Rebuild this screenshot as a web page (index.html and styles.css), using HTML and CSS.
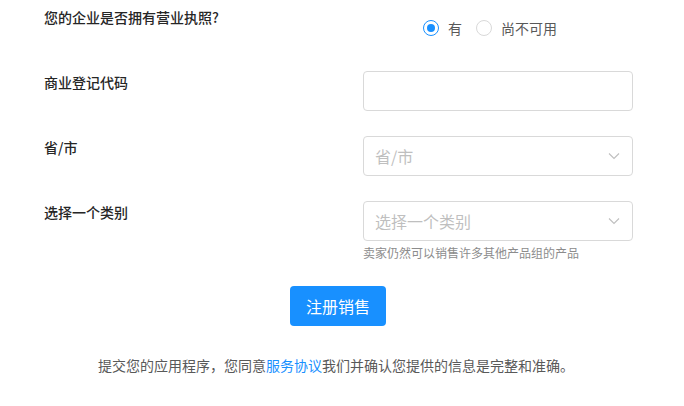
FILE: index.html
```html
<!DOCTYPE html>
<html lang="zh-CN">
<head>
  <meta charset="UTF-8">
  <title>注册销售</title>
  <link rel="stylesheet" href="styles.css">
</head>
<body>

  <div class="page">
    <!-- Seller form -->
    <form class="seller-form" onsubmit="return false">
      <div class="label">您的企业是否拥有营业执照?</div>
      <div class="radios">
        <label class="radio"><span class="dot checked"></span>有</label>
        <label class="radio"><span class="dot"></span>尚不可用</label>
      </div>

      <div class="label">商业登记代码</div>
      <div class="field">
        <input type="text" class="input">
      </div>

      <div class="label">省/市</div>
      <div class="field">
        <div class="select">
          <span class="placeholder">省/市</span>
          <svg class="arrow" width="12" height="8" viewBox="0 0 12 8"><path d="M1 1.5 L6 6.5 L11 1.5" fill="none" stroke="#bfbfbf" stroke-width="1.1"/></svg>
        </div>
      </div>

      <div class="label">选择一个类别</div>
      <div class="field">
        <div class="select">
          <span class="placeholder">选择一个类别</span>
          <svg class="arrow" width="12" height="8" viewBox="0 0 12 8"><path d="M1 1.5 L6 6.5 L11 1.5" fill="none" stroke="#bfbfbf" stroke-width="1.1"/></svg>
        </div>
        <div class="hint">卖家仍然可以销售许多其他产品组的产品</div>
      </div>
    </form>

    <div class="actions">
      <button class="btn-primary">注册销售</button>
    </div>

    <p class="terms">提交您的应用程序，您同意<a href="#">服务协议</a>我们并确认您提供的信息是完整和准确。</p>
  </div>

</body>
</html>
```

FILE: styles.css
```css
body {
  margin: 0;
  font-family: "Noto Sans CJK SC", "Noto Sans", sans-serif;
  background-color: #fff;
  color: #262626;
}

.page {
  width: 676px;
}

.seller-form {
  display: grid;
  grid-template-columns: 319px 270px;
  row-gap: 25px;
  padding: 6px 0 0 44px;
}

.label {
  font-size: 14px;
  line-height: 22px;
  font-weight: 500;
  color: #262626;
  min-height: 40px;
}

.radios {
  display: flex;
  align-items: center;
  padding: 11px 0 0 60px;
  height: 22px;
}

.radio {
  display: flex;
  align-items: center;
  font-size: 14px;
  color: #595959;
  margin-right: 14px;
}

.dot {
  width: 14px;
  height: 14px;
  border: 1px solid #d9d9d9;
  border-radius: 50%;
  margin-right: 9px;
  position: relative;
}

.dot.checked {
  border-color: #1890ff;
}

.dot.checked::after {
  content: "";
  position: absolute;
  left: 3px;
  top: 3px;
  width: 8px;
  height: 8px;
  border-radius: 50%;
  background-color: #1890ff;
}

.input,
.select {
  box-sizing: border-box;
  width: 270px;
  height: 40px;
  border: 1px solid #d9d9d9;
  border-radius: 4px;
  background-color: #fff;
}

.input {
  display: block;
  padding: 0 11px;
  font-size: 16px;
  outline: none;
}

.select {
  display: flex;
  align-items: center;
  justify-content: space-between;
  padding: 0 12px 0 11px;
}

.placeholder {
  font-size: 16px;
  color: #bfbfbf;
}

.hint {
  margin-top: 2px;
  font-size: 12px;
  line-height: 20px;
  color: #8c8c8c;
}

.actions {
  display: flex;
  justify-content: center;
  margin-top: 23px;
}

.btn-primary {
  width: 96px;
  height: 40px;
  border: none;
  border-radius: 4px;
  background-color: #1890ff;
  color: white;
  font-family: inherit;
  font-size: 16px;
  cursor: pointer;
}

.terms {
  margin: 28px 0 0;
  padding-right: 4px;
  text-align: center;
  font-size: 14px;
  line-height: 22px;
  color: #595959;
}

.terms a {
  color: #1890ff;
  text-decoration: none;
}
```
